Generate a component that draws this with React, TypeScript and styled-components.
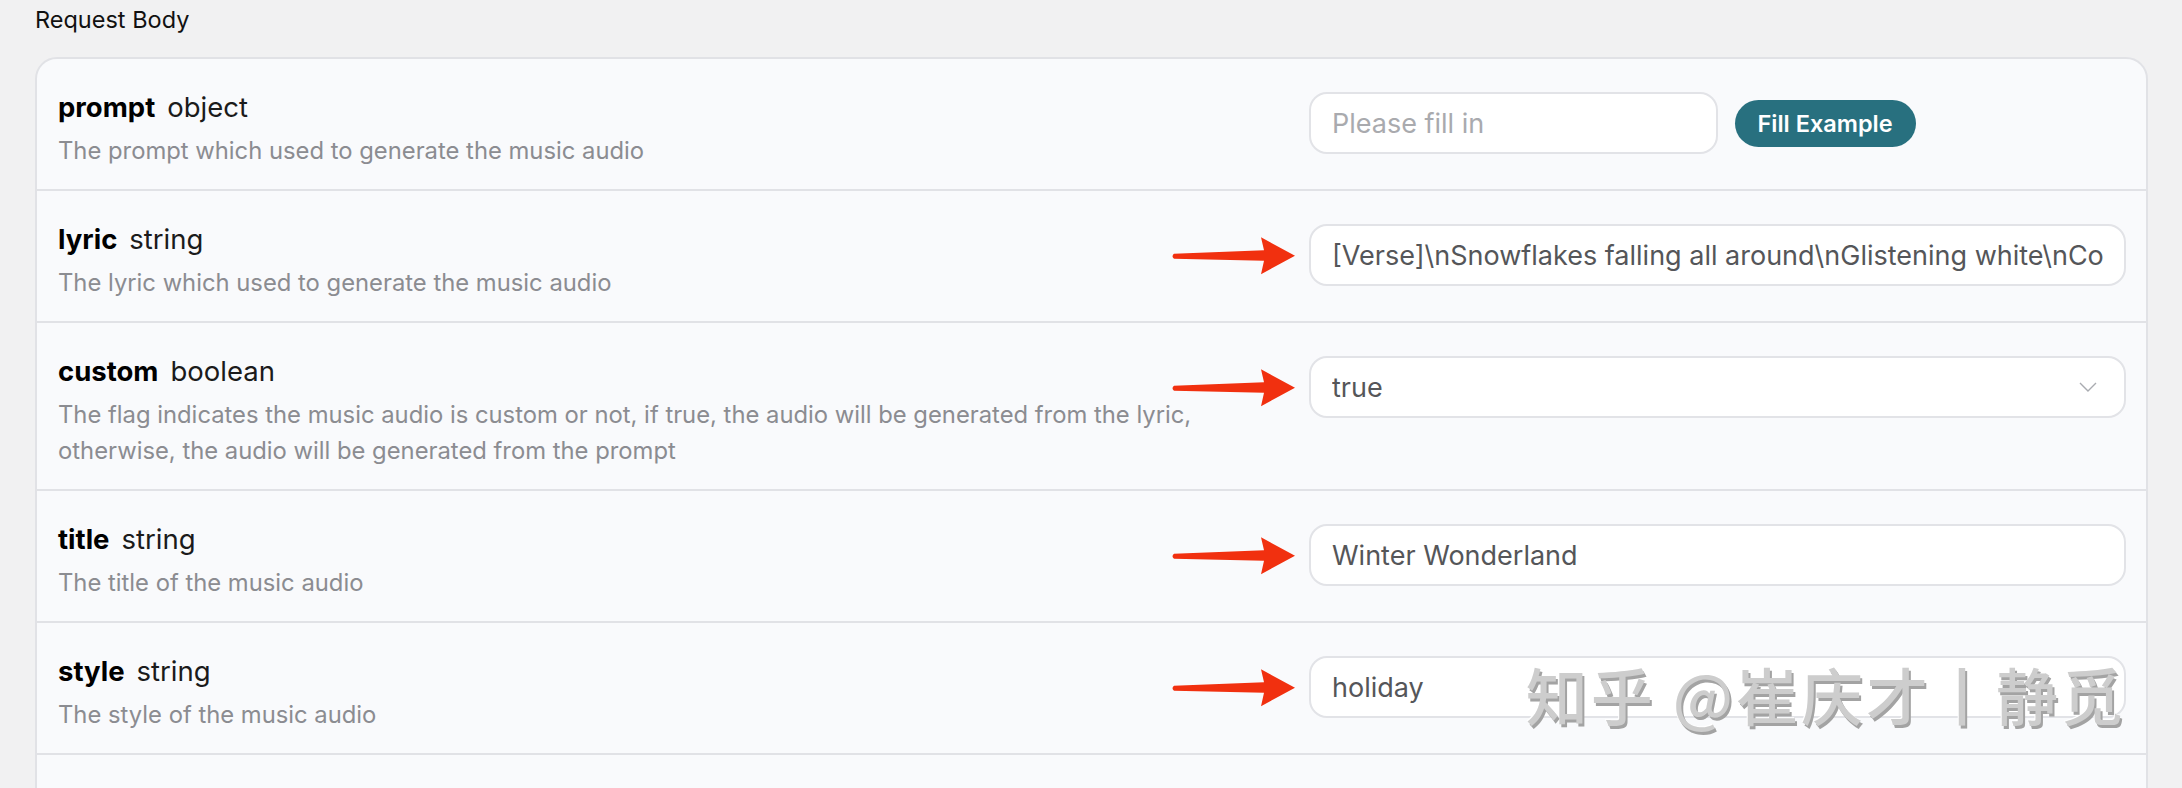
import React from "react";
import styled, { createGlobalStyle } from "styled-components";

type Param = {
  name: string;
  type: string;
  description: string;
  value?: string;
  kind: "input" | "select" | "example";
  marked?: boolean;
  watermark?: boolean;
};

const params: Param[] = [
  {
    name: "prompt",
    type: "object",
    description: "The prompt which used to generate the music audio",
    kind: "example",
  },
  {
    name: "lyric",
    type: "string",
    description: "The lyric which used to generate the music audio",
    value: "[Verse]\\nSnowflakes falling all around\\nGlistening white\\nCold winter night",
    kind: "input",
    marked: true,
  },
  {
    name: "custom",
    type: "boolean",
    description:
      "The flag indicates the music audio is custom or not, if true, the audio will be generated from the lyric, otherwise, the audio will be generated from the prompt",
    value: "true",
    kind: "select",
    marked: true,
  },
  {
    name: "title",
    type: "string",
    description: "The title of the music audio",
    value: "Winter Wonderland",
    kind: "input",
    marked: true,
  },
  {
    name: "style",
    type: "string",
    description: "The style of the music audio",
    value: "holiday",
    kind: "input",
    marked: true,
    watermark: true,
  },
  {
    name: "instrumental",
    type: "boolean",
    description: "Whether the music audio is instrumental only",
    value: "false",
    kind: "select",
  },
];

const Arrow = () => (
  <ArrowMark viewBox="0 0 124 38" width="124" height="38">
    <path d="M3 17 L93 13.5 L90 0.5 L124 19 L90 37.5 L93 24 L3 22 Q0 19.5 3 17 Z" fill="#f1300f" />
  </ArrowMark>
);

const Chevron = () => (
  <ChevronMark viewBox="0 0 18 10" width="18" height="10">
    <path d="M1 1 L9 9 L17 1" fill="none" stroke="#a9abb0" strokeWidth="1.4" />
  </ChevronMark>
);

const App: React.FC = () => {
  return (
    <Page>
      <GlobalStyle />
      <Heading>Request Body</Heading>
      <Card>
        {params.map((p) => (
          <Row key={p.name}>
            <Info>
              <Title>
                <Name>{p.name}</Name>
                <Type>{p.type}</Type>
              </Title>
              <Description>{p.description}</Description>
            </Info>

            <Controls>
              <Field $half={p.kind === "example"}>
                {p.marked && <Arrow />}
                {p.kind === "example" ? (
                  <TextBox readOnly placeholder="Please fill in" />
                ) : (
                  <TextBox readOnly value={p.value} $select={p.kind === "select"} />
                )}
                {p.kind === "select" && <Chevron />}
                {p.watermark && <Watermark>知乎 @崔庆才丨静觅</Watermark>}
              </Field>
              {p.kind === "example" && <FillButton>Fill Example</FillButton>}
            </Controls>
          </Row>
        ))}
      </Card>
    </Page>
  );
};

export default App;

const GlobalStyle = createGlobalStyle`
  html, body {
    margin: 0;
    padding: 0;
    background: #f1f1f2;
    overflow: hidden;
  }
  body {
    font-family: Inter, "Noto Sans", "Liberation Sans", sans-serif;
  }
`;

const Page = styled.div`
  padding: 0 34px 0 35px;
  height: 788px;
  overflow: hidden;
`;

const Heading = styled.div`
  padding: 8px 0 0 0;
  height: 57px;
  box-sizing: border-box;
  font-size: 23.5px;
  line-height: 24px;
  color: #111;
`;

const Card = styled.div`
  background: #f9fafc;
  border: 2px solid #e1e2e6;
  border-radius: 22px;
`;

const Row = styled.div`
  display: flex;
  align-items: flex-start;
  gap: 80px;
  padding: 30px 20px 20px 21px;
  & + & {
    border-top: 2px solid #e1e2e6;
  }
`;

const Info = styled.div`
  flex: 1;
  min-width: 0;
`;

const Title = styled.div`
  display: flex;
  align-items: baseline;
  gap: 12px;
  font-size: 27.5px;
  line-height: 36px;
`;

const Name = styled.span`
  font-weight: 700;
  color: #000;
`;

const Type = styled.span`
  color: #1b1b1b;
`;

const Description = styled.div`
  margin-top: 8px;
  font-size: 23.8px;
  line-height: 36px;
  color: #8b8c91;
`;

const Controls = styled.div`
  width: 817px;
  flex: none;
  display: flex;
  align-items: center;
  gap: 17px;
  margin-top: 3px;
`;

const Field = styled.div<{ $half?: boolean }>`
  position: relative;
  width: ${(p) => (p.$half ? "50%" : "100%")};
`;

const TextBox = styled.input<{ $select?: boolean }>`
  display: block;
  width: 100%;
  box-sizing: border-box;
  height: 62px;
  padding: 0 ${(p) => (p.$select ? "56px" : "21px")} 0 21px;
  border: 2px solid #e2e3e7;
  border-radius: 18px;
  background: #fff;
  font-family: inherit;
  font-size: 27px;
  color: #555659;
  outline: none;
  &::placeholder {
    color: #a9aaae;
  }
`;

const FillButton = styled.button`
  flex: none;
  height: 47px;
  padding: 0 23px;
  border: none;
  border-radius: 24px;
  background: #28707f;
  color: #fff;
  font-family: inherit;
  font-size: 23.5px;
  font-weight: 600;
`;

const ArrowMark = styled.svg`
  position: absolute;
  right: calc(100% + 14px);
  top: 50%;
  transform: translateY(-48%);
`;

const ChevronMark = styled.svg`
  position: absolute;
  right: 29px;
  top: 50%;
  transform: translateY(-50%);
`;

const Watermark = styled.div`
  position: absolute;
  right: 0;
  top: 8px;
  font-family: "Noto Sans CJK SC", sans-serif;
  font-size: 62px;
  line-height: 60px;
  font-weight: 500;
  letter-spacing: 3px;
  color: #cdcdcd;
  text-shadow: 2px 3px 0 #a3a3a3, -1px -1px 0 #fff;
  white-space: nowrap;
  pointer-events: none;
`;
